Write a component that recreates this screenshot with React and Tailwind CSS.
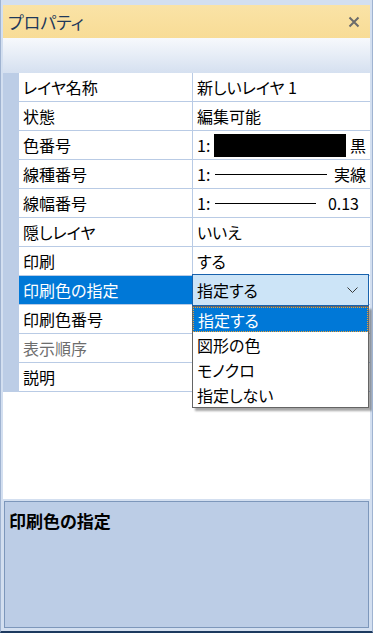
import React from "react";

const rows = [
  { name: "レイヤ名称", value: "新しいレイヤ 1" },
  { name: "状態", value: "編集可能" },
  { name: "色番号", kind: "color" },
  { name: "線種番号", kind: "ltype" },
  { name: "線幅番号", kind: "lwidth" },
  { name: "隠しレイヤ", value: "いいえ" },
  { name: "印刷", value: "する" },
  { name: "印刷色の指定", kind: "combo", selected: true },
  { name: "印刷色番号", value: "" },
  { name: "表示順序", value: "", disabled: true },
  { name: "説明", value: "" },
];

const options = ["指定する", "図形の色", "モノクロ", "指定しない"];

function Value({ row }) {
  if (row.kind === "color") {
    return (
      <div className="flex items-center h-full pl-[4px] pr-[4px]">
        <span>1:</span>
        <span className="ml-[4px] w-[132px] h-[23px] bg-black" />
        <span className="ml-auto">黒</span>
      </div>
    );
  }
  if (row.kind === "ltype") {
    return (
      <div className="flex items-center h-full pl-[4px] pr-[4px]">
        <span>1:</span>
        <span className="ml-[5px] w-[112px] h-px bg-black" />
        <span className="ml-auto">実線</span>
      </div>
    );
  }
  if (row.kind === "lwidth") {
    return (
      <div className="flex items-center h-full pl-[4px] pr-[11px]">
        <span>1:</span>
        <span className="ml-[5px] w-[101px] h-px bg-black" />
        <span className="ml-auto">0.13</span>
      </div>
    );
  }
  if (row.kind === "combo") {
    return <div className="h-full" />;
  }
  return <div className="flex items-center h-full pl-[4px]">{row.value}</div>;
}

export default function App() {
  return (
    <div
      className="relative w-[373px] h-[633px] bg-[#d3dff0] border-l border-r border-[#9fb3d1] border-b-[2px] border-b-[#1d3a5f] flex flex-col px-[2px] pt-[5px] overflow-hidden text-[16px] text-black [font-feature-settings:'palt']"
      style={{ fontFamily: '"Noto Sans CJK JP", "Noto Sans", sans-serif' }}
    >
      {/* title bar */}
      <div className="h-[33px] bg-gradient-to-b from-[#fae3a6] to-[#f8dc96] flex items-center pl-[5px] pr-[10px] shrink-0">
        <span className="text-[17px] text-[#1e395b]">プロパティ</span>
        <svg className="ml-auto" width="12" height="12" viewBox="0 0 12 12">
          <path d="M1.5 1.5 L10.5 10.5 M10.5 1.5 L1.5 10.5" stroke="#6b6b6b" strokeWidth="2" />
        </svg>
      </div>
      {/* toolbar band */}
      <div className="h-[35px] bg-gradient-to-b from-[#f7f9fc] to-[#d5e0f0] shrink-0" />

      {/* property grid */}
      <div className="relative bg-white shrink-0">
        {rows.map((row) => (
          <div key={row.name} className="flex h-[29px]">
            <div className="w-[16px] bg-[#bccde6] shrink-0" />
            <div
              className={
                "w-[173px] shrink-0 flex items-center pl-[4px] border-b border-[#b9cbe5] " +
                (row.selected ? "bg-[#0078d7] text-white" : row.disabled ? "text-[#6d6d6d]" : "")
              }
            >
              {row.name}
            </div>
            <div className="w-px bg-[#b9cbe5] shrink-0" />
            <div className="flex-1 border-b border-[#b9cbe5]">
              <Value row={row} />
            </div>
          </div>
        ))}

        {/* combo box over the selected row */}
        <div className="absolute left-[189px] top-[201px] w-[177px] z-10">
          <div className="h-[32px] bg-[#cce4f7] border border-[#1862ad] flex items-center pl-[4px] pr-[10px]">
            <span>指定する</span>
            <svg className="ml-auto" width="11" height="7" viewBox="0 0 11 7">
              <path d="M0.5 0.5 L5.5 5.5 L10.5 0.5" fill="none" stroke="#3a3a3a" strokeWidth="1" />
            </svg>
          </div>
          <div className="bg-white border border-[#646464] shadow-[3px_3px_2px_rgba(0,0,0,0.35)]">
            {options.map((o, i) => (
              <div
                key={o}
                className={
                  "h-[25px] flex items-center pl-[4px] " +
                  (i === 0 ? "bg-[#0078d7] text-white border border-dotted border-[#f0a030]" : "")
                }
              >
                {o}
              </div>
            ))}
          </div>
        </div>
      </div>

      {/* empty area */}
      <div className="flex-1 bg-white" />

      {/* help panel */}
      <div className="h-[127px] mt-[2px] mb-[3px] mx-[1px] bg-[#bccde6] border border-[#7d97bb] shrink-0 px-[4px] pt-[6px]">
        <div className="font-bold text-[17px]">印刷色の指定</div>
      </div>
    </div>
  );
}
